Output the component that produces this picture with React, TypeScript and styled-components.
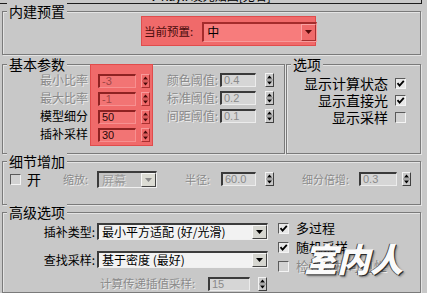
import styled, { createGlobalStyle } from "styled-components";

const BG = "#c8c8c8";

const GlobalStyle = createGlobalStyle`
  html, body { margin: 0; padding: 0; background: ${BG}; overflow: hidden; }
  body { font-family: "Noto Sans CJK SC", "Noto Sans", sans-serif; color: #000; }
`;

const Panel = styled.div`
  position: relative;
  width: 427px;
  height: 293px;
  box-sizing: border-box;
  padding: 0 6px 0 2px;
  display: flex;
  flex-direction: column;
  overflow: hidden;
`;

const Header = styled.div`
  height: 3px;
  margin: 0 -1px 0 -2px;
  border-bottom: 1px solid #1c1c1c;
  border-right: 1px solid #1c1c1c;
  overflow: hidden;
  display: flex;
  justify-content: center;
  align-items: flex-end;
  font-size: 12px;
  line-height: 14px;
`;

const Group = styled.div<{ $w?: number; $h: number; $mt: number }>`
  position: relative;
  box-sizing: border-box;
  flex: ${(p) => (p.$w ? "none" : "1")};
  width: ${(p) => (p.$w ? `${p.$w}px` : "auto")};
  height: ${(p) => p.$h}px;
  margin-top: ${(p) => p.$mt}px;
  border: 1px solid #7a7a7a;
  box-shadow: inset 1px 1px 0 #e4e4e4, 1px 1px 0 #e4e4e4;
`;

const GroupRow = styled.div`
  display: flex;
  gap: 1px;
  margin-top: 9px;
  & > ${Group} { margin-top: 0; }
`;

const Legend = styled.span`
  position: absolute;
  top: -9px;
  left: 4px;
  padding: 0 2px;
  background: ${BG};
  font-size: 14px;
  line-height: 16px;
  white-space: nowrap;
`;

const Label = styled.span<{ $dim?: boolean; $size?: number; $w?: number; $ml?: number; $right?: boolean; $color?: string }>`
  display: inline-block;
  flex: none;
  font-size: ${(p) => p.$size ?? 12}px;
  line-height: 1.15;
  white-space: nowrap;
  width: ${(p) => (p.$w ? `${p.$w}px` : "auto")};
  margin-left: ${(p) => p.$ml ?? 0}px;
  text-align: ${(p) => (p.$right ? "right" : "left")};
  color: ${(p) => p.$color ?? (p.$dim ? "#8a8a8a" : "#000")};
  text-shadow: ${(p) => (p.$dim ? "1px 1px 0 #ececec" : "none")};
`;

/* ---- controls ---- */

const Field = styled.div<{ $w: number; $ml?: number; $red?: boolean; $dark?: boolean }>`
  flex: none;
  box-sizing: border-box;
  width: ${(p) => p.$w}px;
  height: 14px;
  margin-left: ${(p) => p.$ml ?? 0}px;
  padding-left: 2px;
  border-top: 2px solid ${(p) => (p.$red ? "#8e2222" : "#3a3a3a")};
  border-left: 2px solid ${(p) => (p.$red ? "#8e2222" : "#3a3a3a")};
  border-bottom: 1px solid ${(p) => (p.$red ? "#f79090" : "#ececec")};
  border-right: 1px solid ${(p) => (p.$red ? "#f79090" : "#ececec")};
  background: ${(p) => (p.$red ? "#f27474" : "#d6d6d6")};
  font-family: "Liberation Sans", Arial, sans-serif;
  font-size: 11px;
  line-height: 11px;
  color: ${(p) => (p.$dark ? (p.$red ? "#2a0808" : "#000") : p.$red ? "#a04646" : "#8a8a8a")};
`;

const SpinBox = styled.div<{ $ml?: number; $red?: boolean }>`
  flex: none;
  box-sizing: border-box;
  width: 9px;
  height: 14px;
  margin-left: ${(p) => p.$ml ?? 0}px;
  border-top: 1px solid ${(p) => (p.$red ? "#f89a9a" : "#f4f4f4")};
  border-left: 1px solid ${(p) => (p.$red ? "#f89a9a" : "#f4f4f4")};
  border-bottom: 1px solid ${(p) => (p.$red ? "#a83030" : "#404040")};
  border-right: 1px solid ${(p) => (p.$red ? "#a83030" : "#404040")};
  display: flex;
  align-items: center;
  justify-content: center;
`;

const Spin = ({ ml, red }: { ml?: number; red?: boolean }) => (
  <SpinBox $ml={ml} $red={red}>
    <svg width="7" height="12" viewBox="0 0 7 12">
      <path d="M3.5 1.5L6 4.5H1Z M3.5 10.5L6 7.5H1Z" fill={red ? "#4a0a0a" : "#000"} />
      <line x1="0" y1="6" x2="7" y2="6" stroke={red ? "#c04848" : "#888"} strokeWidth="1" />
    </svg>
  </SpinBox>
);

const CheckBox = styled.span<{ $ml?: number; $dim?: boolean }>`
  flex: none;
  box-sizing: border-box;
  width: 11px;
  height: 11px;
  margin-left: ${(p) => p.$ml ?? 0}px;
  border-top: 1px solid #5a5a5a;
  border-left: 1px solid #5a5a5a;
  border-bottom: 1px solid #f4f4f4;
  border-right: 1px solid #f4f4f4;
  background: ${(p) => (p.$dim ? "#d2d2d2" : "#e8e8e8")};
  display: inline-flex;
  align-items: center;
  justify-content: center;
`;

const Check = ({ on, ml, dim }: { on?: boolean; ml?: number; dim?: boolean }) => (
  <CheckBox $ml={ml} $dim={dim}>
    {on && (
      <svg width="9" height="9" viewBox="0 0 9 9">
        <path d="M1.5 4.2L3.6 6.6L7.8 1.8" fill="none" stroke="#000" strokeWidth="1.8" />
      </svg>
    )}
  </CheckBox>
);

type Tone = "red" | "normal" | "disabled";

const SelectBox = styled.div<{ $w: number; $h: number; $ml?: number; $tone: Tone }>`
  flex: none;
  box-sizing: border-box;
  width: ${(p) => p.$w}px;
  height: ${(p) => p.$h}px;
  margin-left: ${(p) => p.$ml ?? 0}px;
  padding-left: 3px;
  display: flex;
  align-items: center;
  justify-content: space-between;
  border-top: 2px solid ${(p) => (p.$tone === "red" ? "#a42c2c" : "#3c3c3c")};
  border-left: 2px solid ${(p) => (p.$tone === "red" ? "#a42c2c" : "#3c3c3c")};
  border-bottom: 1px solid ${(p) => (p.$tone === "red" ? "#f89a9a" : "#f0f0f0")};
  border-right: 1px solid ${(p) => (p.$tone === "red" ? "#f89a9a" : "#f0f0f0")};
  background: ${(p) => (p.$tone === "red" ? "#f77c7c" : p.$tone === "disabled" ? "#c4c4c4" : "#f2f2f2")};
  font-size: 12px;
  line-height: 1;
  white-space: nowrap;
  overflow: hidden;
  color: ${(p) => (p.$tone === "disabled" ? "#9a9a9a" : "#000")};
  text-shadow: ${(p) => (p.$tone === "disabled" ? "1px 1px 0 #e6e6e6" : "none")};
`;

const SelectBtn = styled.span<{ $tone: Tone }>`
  flex: none;
  box-sizing: border-box;
  width: 15px;
  height: 100%;
  border-top: 1px solid ${(p) => (p.$tone === "red" ? "#fba0a0" : "#f8f8f8")};
  border-left: 1px solid ${(p) => (p.$tone === "red" ? "#fba0a0" : "#f8f8f8")};
  border-bottom: 1px solid ${(p) => (p.$tone === "red" ? "#a83030" : "#444")};
  border-right: 1px solid ${(p) => (p.$tone === "red" ? "#a83030" : "#444")};
  background: ${(p) => (p.$tone === "red" ? "#f06a6a" : p.$tone === "disabled" ? "#dcdcd4" : "#d6d6d0")};
  display: flex;
  align-items: center;
  justify-content: center;
`;

const Select = ({ w, h = 17, ml, tone = "normal", text }: { w: number; h?: number; ml?: number; tone?: Tone; text: string }) => (
  <SelectBox $w={w} $h={h} $ml={ml} $tone={tone}>
    <span>{text}</span>
    <SelectBtn $tone={tone}>
      <svg width="7" height="4" viewBox="0 0 7 4">
        <path d="M0 0H7L3.5 4Z" fill={tone === "red" ? "#5a0c0c" : tone === "disabled" ? "#8a8a8a" : "#000"} />
      </svg>
    </SelectBtn>
  </SelectBox>
);

/* ---- group 1 ---- */

const PresetBody = styled.div`
  padding: 4px 0 0 138px;
`;

const Highlight = styled.div`
  box-sizing: border-box;
  background: #f06a6a;
  border: 1px solid #e04c4c;
`;

const PresetBox = styled(Highlight)`
  width: 175px;
  height: 30px;
  display: flex;
  align-items: center;
  padding: 1px 1px 0 2px;
`;

/* ---- group 2 ---- */

const BasicBody = styled.div`
  display: flex;
  align-items: flex-start;
`;

const Col = styled.div<{ $pt: number; $w?: number }>`
  display: flex;
  flex-direction: column;
  padding-top: ${(p) => p.$pt}px;
  width: ${(p) => (p.$w ? `${p.$w}px` : "auto")};
`;

const Row = styled.div<{ $h: number; $end?: boolean; $mt?: number }>`
  height: ${(p) => p.$h}px;
  margin-top: ${(p) => p.$mt ?? 0}px;
  display: flex;
  align-items: center;
  justify-content: ${(p) => (p.$end ? "flex-end" : "flex-start")};
`;

const SpinCol = styled(Highlight)`
  width: 63px;
  height: 82px;
  margin: -1px 0 0 2px;
  padding: 7px 0 0 7px;
`;

const OptionsBody = styled.div`
  padding: 10px 14px 0 0;
  display: flex;
  flex-direction: column;
`;

/* ---- group 3 / 4 ---- */

const DetailBody = styled.div`
  padding: 8px 0 0 7px;
`;

const AdvBody = styled.div`
  display: flex;
  align-items: flex-start;
`;

const Watermark = styled.div`
  position: absolute;
  left: 304px;
  top: 234px;
  font-size: 33px;
  font-weight: 900;
  font-style: italic;
  letter-spacing: 0px;
  color: #fbfbfb;
  text-shadow: 1px 1px 0 #2a2a2a, -1px 0 0 #4a4a4a, 2px 2px 2px rgba(0, 0, 0, 0.35);
  pointer-events: none;
`;

const basic = [
  { label: "最小比率", value: "-3", dark: false, l2: "颜色阈值:", v2: "0.4" },
  { label: "最大比率", value: "-1", dark: false, l2: "标准阈值:", v2: "0.2" },
  { label: "模型细分", value: "50", dark: true, l2: "间距阈值:", v2: "0.1" },
  { label: "插补采样", value: "30", dark: true, l2: "", v2: "" },
];

const options = [
  { label: "显示计算状态", on: true },
  { label: "显示直接光", on: true },
  { label: "显示采样", on: false },
];

const App = () => {
  return (
    <>
      <GlobalStyle />
      <Panel>
        <Header>
          <span>V-Ray:: 发光贴图[无名]</span>
        </Header>

        <Group $h={38} $mt={7}>
          <Legend>内建预置</Legend>
          <PresetBody>
            <PresetBox>
              <Label $size={11.5} $color="#4a0c0c">当前预置:</Label>
              <Select w={115} h={20} ml={9} tone="red" text="中" />
            </PresetBox>
          </PresetBody>
        </Group>

        <GroupRow>
          <Group $w={283} $h={90} $mt={0}>
            <Legend>基本参数</Legend>
            <BasicBody>
              <Col $pt={6} $w={85}>
                {basic.map((r) => (
                  <Row key={r.label} $h={18} $end>
                    <Label $dim={!r.dark}>{r.label}</Label>
                  </Row>
                ))}
              </Col>
              <SpinCol>
                {basic.map((r) => (
                  <Row key={r.label} $h={18}>
                    <Field $w={38} $red $dark={r.dark}>{r.value}</Field>
                    <Spin ml={5} red />
                  </Row>
                ))}
              </SpinCol>
              <Col $pt={6}>
                {basic
                  .filter((r) => r.l2)
                  .map((r) => (
                    <Row key={r.l2} $h={18}>
                      <Label $dim $w={57} $ml={8} $right>{r.l2}</Label>
                      <Field $w={36} $ml={2}>{r.v2}</Field>
                      <Spin ml={9} />
                    </Row>
                  ))}
              </Col>
            </BasicBody>
          </Group>

          <Group $h={90} $mt={0}>
            <Legend>选项</Legend>
            <OptionsBody>
              {options.map((o) => (
                <Row key={o.label} $h={17} $end>
                  <Label $size={14}>{o.label}</Label>
                  <Check on={o.on} ml={7} dim={!o.on} />
                </Row>
              ))}
            </OptionsBody>
          </Group>
        </GroupRow>

        <Group $h={39} $mt={7}>
          <Legend>细节增加</Legend>
          <DetailBody>
            <Row $h={18}>
              <Check ml={0} dim />
              <Label $size={14} $ml={6}>开</Label>
              <Label $dim $size={11} $ml={22} $w={34}>缩放:</Label>
              <Select w={60} h={17} tone="disabled" text="屏幕" />
              <Label $dim $size={11} $ml={28} $w={36}>半径:</Label>
              <Field $w={35}>60.0</Field>
              <Spin ml={9} />
              <Label $dim $size={11} $ml={28} $w={57}>细分倍增:</Label>
              <Field $w={38}>0.3</Field>
              <Spin ml={5} />
            </Row>
          </DetailBody>
        </Group>

        <Group $h={92} $mt={7}>
          <Legend>高级选项</Legend>
          <AdvBody>
            <Col $pt={10}>
              <Row $h={17}>
                <Label $w={92} $right>插补类型:</Label>
                <Select w={171} ml={2} text="最小平方适配 (好/光滑)" />
              </Row>
              <Row $h={17} $mt={11}>
                <Label $w={92} $right>查找采样:</Label>
                <Select w={171} ml={2} text="基于密度 (最好)" />
              </Row>
              <Row $h={16} $mt={8}>
                <Label $dim $size={11.5} $ml={97} $w={108}>计算传递插值采样:</Label>
                <Field $w={42}>15</Field>
                <Spin ml={8} />
              </Row>
            </Col>
            <Col $pt={6}>
              <Row $h={19}>
                <Check on ml={10} />
                <Label $size={13} $ml={7}>多过程</Label>
              </Row>
              <Row $h={19}>
                <Check on ml={10} />
                <Label $size={13} $ml={7}>随机采样</Label>
              </Row>
              <Row $h={19}>
                <Check ml={10} dim />
                <Label $dim $size={13} $ml={7}>检查采样可见性</Label>
              </Row>
            </Col>
          </AdvBody>
        </Group>

        <Watermark>室内人</Watermark>
      </Panel>
    </>
  );
};

export default App;
